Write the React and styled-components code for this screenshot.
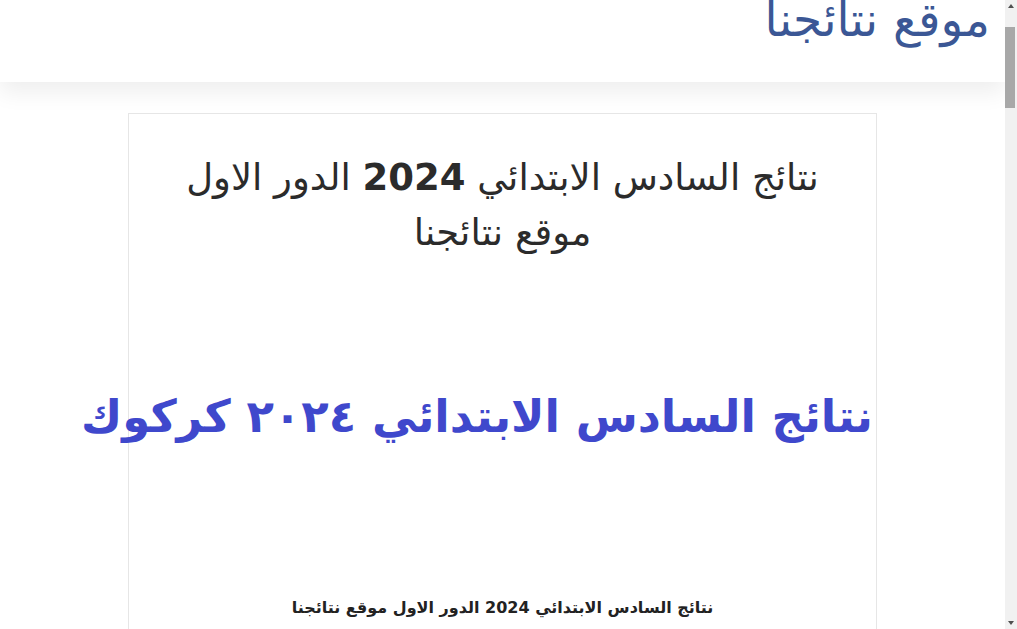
import React from "react";
import styled, { createGlobalStyle } from "styled-components";

const GlobalStyle = createGlobalStyle`
  html, body {
    margin: 0;
    padding: 0;
    background: #fff;
  }
  body {
    font-family: "DejaVu Sans", sans-serif;
    direction: rtl;
    padding-right: 12px;
  }
`;

const Header = styled.header`
  height: 82px;
  padding: 0 15px;
  background: #fff;
  box-shadow: 0 10px 22px rgba(0, 0, 0, 0.07);
  overflow: hidden;
`;

const SiteTitle = styled.h1`
  margin: -10px 0 0;
  font-size: 47px;
  line-height: 60px;
  font-weight: 400;
  color: #3b5795;
  text-align: right;
`;

const Main = styled.main`
  padding: 31px 0 40px;
  display: flex;
  justify-content: center;
`;

const Card = styled.article`
  width: 749px;
  border: 1px solid #e6e6e6;
  background: #fff;
  padding: 36px 30px 40px;
  box-sizing: border-box;
`;

const PostTitle = styled.h2`
  margin: 0;
  font-size: 37px;
  line-height: 55px;
  font-weight: 400;
  color: #2b2b2b;
  text-align: center;

  b {
    font-weight: 700;
  }
`;

const Banner = styled.div`
  margin: 124px -27px 0 0;
  white-space: nowrap;
  text-align: right;
  font-size: 45px;
  line-height: 66px;
  font-weight: 700;
  color: #3f48cc;
`;

const Caption = styled.p`
  margin: 148px 0 0;
  font-size: 16px;
  font-weight: 700;
  color: #222;
  text-align: center;
`;

/* the page's scrollbar, drawn over the right edge */
const ScrollTrack = styled.div`
  position: fixed;
  top: 0;
  right: 0;
  width: 12px;
  height: 100vh;
  background: #f1f1f1;
  display: flex;
  flex-direction: column;
  align-items: flex-end;
`;

const ScrollArrow = styled.div`
  height: 12px;
  width: 12px;
  display: flex;
  align-items: center;
  justify-content: center;
  flex: none;
  margin-top: ${(p) => (p.$down ? "auto" : "0")};

  &::before {
    content: "";
    border-left: 3px solid transparent;
    border-right: 3px solid transparent;
    ${(p) =>
      p.$down ? "border-top: 4px solid #505050;" : "border-bottom: 4px solid #505050;"}
  }
`;

const ScrollThumb = styled.div`
  margin-top: 15px;
  width: 10px;
  height: 81px;
  background: #a8a8a8;
`;

export default function App() {
  return (
    <>
      <GlobalStyle />
      <Header>
        <SiteTitle>موقع نتائجنا</SiteTitle>
      </Header>
      <Main>
        <Card>
          <PostTitle>
            نتائج السادس الابتدائي <b>2024</b> الدور الاول
            <br />
            موقع نتائجنا
          </PostTitle>
          <Banner>نتائج السادس الابتدائي ٢٠٢٤ كركوك</Banner>
          <Caption>نتائج السادس الابتدائي 2024 الدور الاول موقع نتائجنا</Caption>
        </Card>
      </Main>
      <ScrollTrack>
        <ScrollArrow />
        <ScrollThumb />
        <ScrollArrow $down />
      </ScrollTrack>
    </>
  );
}
